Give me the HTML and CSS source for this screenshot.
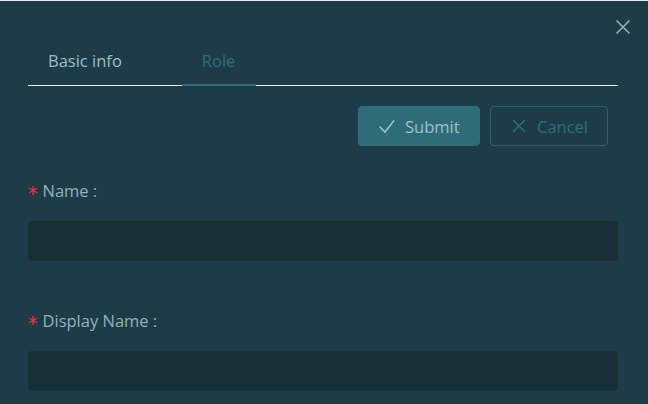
FILE: index.html
```html
<!DOCTYPE html>
<html>
<head>
<meta charset="utf-8">
<link rel="stylesheet" href="styles.css">
</head>
<body>
<div class="modal">
  <button class="close" aria-label="close">
    <svg width="16" height="16" viewBox="0 0 16 16"><path d="M1.5 1.5L14.5 14.5M14.5 1.5L1.5 14.5" stroke="#8fb0b8" stroke-width="1.6" fill="none"/></svg>
  </button>
  <div class="tabs">
    <div class="tab">Basic info</div>
    <div class="tab active">Role</div>
  </div>
  <div class="actions">
    <button class="btn primary">
      <svg width="18" height="18" viewBox="0 0 18 18"><path d="M1.5 9.5L7 15L16 3.5" stroke="#9fc1c8" stroke-width="1.6" fill="none"/></svg>
      <span>Submit</span>
    </button>
    <button class="btn ghost">
      <svg width="14" height="14" viewBox="0 0 14 14"><path d="M1 1L13 13M13 1L1 13" stroke="#2f6f7c" stroke-width="1.5" fill="none"/></svg>
      <span>Cancel</span>
    </button>
  </div>
  <div class="form">
    <div class="item">
      <label class="label"><span class="req">*</span>Name<span class="colon">:</span></label>
      <div class="input"></div>
    </div>
    <div class="item">
      <label class="label"><span class="req">*</span>Display Name<span class="colon">:</span></label>
      <div class="input"></div>
    </div>
  </div>
</div>
</body>
</html>
```
FILE: styles.css
```css
html, body {
  margin: 0;
  padding: 0;
  background: #e9e9e9;
  height: 404px;
  overflow: hidden;
}
.modal {
  position: relative;
  margin-top: 1px;
  height: 403px;
  background: #1e3c47;
  padding: 0 30px 0 28px;
  box-sizing: border-box;
  font-family: "Open Sans", "Noto Sans", sans-serif;
  font-size: 16.5px;
  color: #8fb3bd;
}
.close {
  position: absolute;
  top: 18px;
  right: 17px;
  background: none;
  border: 0;
  padding: 0;
  width: 16px;
  height: 16px;
  display: flex;
}
.tabs {
  display: flex;
  gap: 40px;
  padding-top: 37px;
  border-bottom: 1px solid #e6eef0;
}
.tab {
  padding: 11px 20px 11px;
  line-height: 24px;
  color: #9dbcc4;
  margin-bottom: -1px;
  border-bottom: 2px solid transparent;
}
.tab.active {
  color: #2f6f7c;
  border-bottom-color: #2d6c78;
  padding: 11px 21px 11px 20px;
}
.actions {
  display: flex;
  justify-content: flex-end;
  gap: 10px;
  margin-top: 20px;
  margin-right: 10px;
}
.btn {
  height: 40px;
  box-sizing: border-box;
  border-radius: 4px;
  display: flex;
  align-items: center;
  gap: 9px;
  font-family: inherit;
  font-size: 16.5px;
  padding: 0 19px;
}
.btn.primary {
  width: 122px;
  background: #2d6d79;
  border: 1px solid #2d6d79;
  color: #9fc1c8;
}
.btn.ghost {
  width: 118px;
  background: transparent;
  border: 1px solid #2a6470;
  color: #2f6f7c;
  padding-left: 21px;
  gap: 11px;
}
.form {
  margin-top: 33px;
}
.item {
  margin-bottom: 48px;
}
.label {
  display: flex;
  align-items: center;
  line-height: 24px;
  margin-bottom: 18px;
  color: #8fb3bd;
}
.colon {
  margin-left: 4px;
}
.req {
  color: #e8323f;
  margin-right: 5px;
  font-family: "DejaVu Sans", sans-serif;
  font-size: 19px;
  line-height: 24px;
  position: relative;
  top: 2px;
}
.input {
  height: 40px;
  background: #182f38;
  border-radius: 4px;
}
```
